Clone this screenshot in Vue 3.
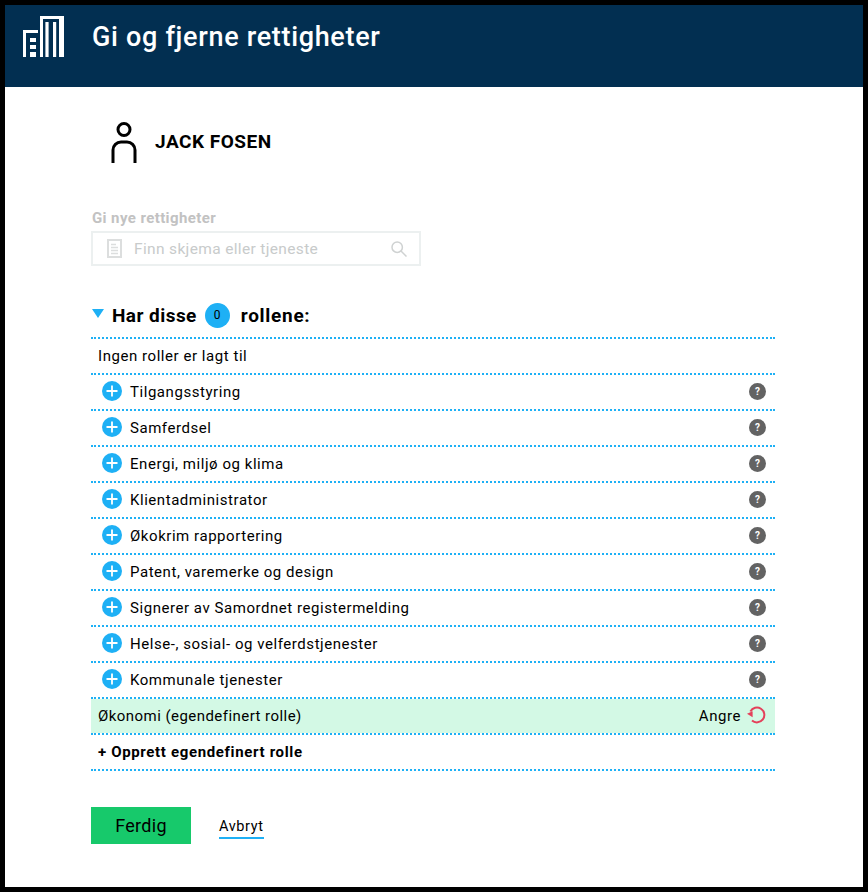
<script setup>
const roles = [
  'Tilgangsstyring',
  'Samferdsel',
  'Energi, miljø og klima',
  'Klientadministrator',
  'Økokrim rapportering',
  'Patent, varemerke og design',
  'Signerer av Samordnet registermelding',
  'Helse-, sosial- og velferdstjenester',
  'Kommunale tjenester'
]
</script>

<template>
  <div class="frame">
    <header class="header">
      <svg class="logo" width="41" height="41" viewBox="0 0 41 41" fill="#fff">
        <path d="M0 14h15v3H3v24H0z" />
        <path d="M7 22h6v4H7zM7 29h6v4H7zM7 36h6v5H7z" />
        <path d="M17 0h24v41h-5V3H20v38h-3z" />
        <path d="M22.4 6h3.2v35h-3.2zM30 6h3.2v35H30z" />
      </svg>
      <h1 class="title">Gi og fjerne rettigheter</h1>
    </header>
    <main class="content">
      <div class="person">
        <svg width="26" height="42" viewBox="0 0 26 42" fill="none" stroke="#000" stroke-width="3">
          <circle cx="13" cy="7.5" r="6" />
          <path d="M2 41V28a8 8 0 0 1 8-8h6a8 8 0 0 1 8 8v13" />
        </svg>
        <span class="person-name">JACK FOSEN</span>
      </div>

      <div class="search-label">Gi nye rettigheter</div>
      <div class="search">
        <svg class="doc" width="15" height="19" viewBox="0 0 15 19" fill="none" stroke="#dcdede">
          <rect x="1" y="1" width="13" height="17" stroke-width="2" />
          <path d="M4 5.5h5M4 8.5h7M4 11.5h7M4 14.5h7" stroke-width="1.4" />
        </svg>
        <span class="search-text">Finn skjema eller tjeneste</span>
        <svg width="16" height="16" viewBox="0 0 16 16" fill="none" stroke="#cfd2d2" stroke-width="1.5">
          <circle cx="6.2" cy="6.2" r="5.2" />
          <path d="M10 10l5.5 5.5" />
        </svg>
      </div>

      <div class="section-head">
        <span class="triangle"></span>
        <span>Har disse</span>
        <span class="count">0</span>
        <span class="section-end">rollene:</span>
      </div>

      <div class="list">
        <div class="row plain">Ingen roller er lagt til</div>
        <div v-for="role in roles" :key="role" class="row">
          <svg class="plus" width="20" height="20" viewBox="0 0 20 20">
            <circle cx="10" cy="10" r="10" fill="#1eb0f5" />
            <path d="M10 4.5v11M4.5 10h11" stroke="#fff" stroke-width="1.8" />
          </svg>
          <span class="role-name">{{ role }}</span>
          <span class="help">?</span>
        </div>
        <div class="row plain added">
          <span class="role-name custom">Økonomi (egendefinert rolle)</span>
          <span class="undo">Angre</span>
          <svg width="20" height="18" viewBox="0 0 20 18" fill="none">
            <path d="M4.4 5.5A7.4 7.4 0 1 1 6 14.5" stroke="#e4405a" stroke-width="2" />
            <path d="M1 7.8L6.6 5.2V11.2z" fill="#e4405a" />
          </svg>
        </div>
        <div class="row plain create">+ Opprett egendefinert rolle</div>
      </div>

      <div class="actions">
        <button class="done" type="button">Ferdig</button>
        <a class="cancel">Avbryt</a>
      </div>
    </main>
  </div>
</template>

<style scoped>
.frame {
  box-sizing: border-box;
  width: 868px;
  height: 892px;
  border: 5px solid #000;
  background: #fff;
  font-family: Roboto, "Liberation Sans", sans-serif;
  color: #000;
  overflow: hidden;
}
.header {
  height: 82px;
  background: #022f51;
  display: flex;
  align-items: flex-start;
  padding: 11px 0 0 18px;
  box-sizing: border-box;
}
.title {
  margin: 1px 0 0 28px;
  font-size: 27px;
  line-height: 40px;
  font-weight: 500;
  color: #fff;
  letter-spacing: 0.68px;
}
.content {
  padding: 35px 0 0 86px;
  width: 685px;
  box-sizing: content-box;
}
.person {
  display: flex;
  align-items: flex-start;
  height: 42px;
  padding-left: 20px;
}
.person-name {
  margin-left: 18px;
  margin-top: 1px;
  font-size: 19px;
  line-height: 38px;
  font-weight: 700;
  letter-spacing: 0.5px;
}
.search-label {
  margin-top: 45px;
  font-size: 15px;
  line-height: 18px;
  font-weight: 700;
  color: #c2c2c2;
  letter-spacing: 0.4px;
  padding-left: 1px;
}
.search {
  margin-top: 4px;
  box-sizing: border-box;
  width: 330px;
  height: 35px;
  border: 2px solid #ecf0f0;
  display: flex;
  align-items: center;
  padding: 0 12px 0 14px;
}
.search-text {
  flex: 1;
  margin-left: 12px;
  font-size: 15.5px;
  color: #c8cbcb;
  letter-spacing: 0.35px;
}
.section-head {
  margin-top: 34px;
  height: 30px;
  display: flex;
  align-items: center;
  font-size: 19px;
  font-weight: 700;
  letter-spacing: 0.45px;
}
.section-end {
  letter-spacing: 0.7px;
}
.triangle {
  width: 0;
  height: 0;
  border-left: 6px solid transparent;
  border-right: 6px solid transparent;
  border-top: 9px solid #1eb0f5;
  margin: 0 8px 3px 1px;
}
.count {
  width: 25px;
  height: 25px;
  border-radius: 50%;
  background: #1eb0f5;
  margin: 0 11px 0 8px;
  display: flex;
  align-items: center;
  justify-content: center;
  font-size: 12px;
  font-weight: 400;
}
.list {
  margin-top: 7px;
  border-top: 2px dotted #1eb0f5;
  width: 684px;
}
.row {
  box-sizing: border-box;
  height: 36px;
  border-bottom: 2px dotted #1eb0f5;
  display: flex;
  align-items: center;
  padding: 0 9px 0 11px;
  font-size: 15px;
  letter-spacing: 0.55px;
}
.plain {
  padding-left: 7px;
}
.plus {
  flex: none;
  margin-right: 8px;
  margin-bottom: 2px;
}
.role-name {
  flex: 1;
}
.custom {
  letter-spacing: 0.45px;
}
.help {
  width: 17px;
  height: 17px;
  margin-bottom: 2px;
  border-radius: 50%;
  background: #636363;
  color: #fff;
  font-size: 10px;
  font-weight: 700;
  letter-spacing: 0;
  display: flex;
  align-items: center;
  justify-content: center;
}
.added {
  background: #d3f9e5;
  background-clip: padding-box;
}
.undo {
  margin-right: 5px;
}
.added svg {
  margin-bottom: 2px;
}
.create {
  font-weight: 700;
  font-size: 15px;
  letter-spacing: 0.65px;
}
.actions {
  margin-top: 36px;
  display: flex;
  align-items: flex-start;
}
.done {
  width: 100px;
  height: 37px;
  border: 0;
  background: #17c96b;
  font-family: inherit;
  font-size: 18px;
  letter-spacing: 0.3px;
  color: #000;
  padding: 0;
}
.cancel {
  margin-left: 28px;
  margin-top: 10px;
  padding-bottom: 1px;
  font-size: 14.5px;
  line-height: 19px;
  letter-spacing: 0.6px;
  border-bottom: 2px solid #1eb0f5;
}
</style>
